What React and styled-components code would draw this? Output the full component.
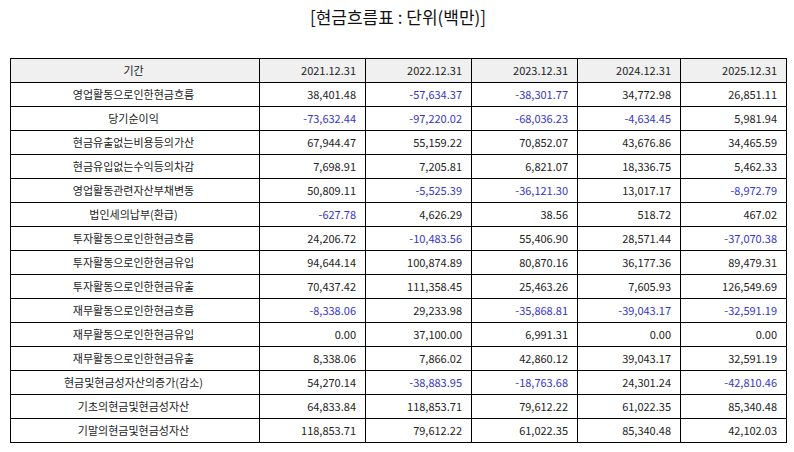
import React from "react";
import styled, { createGlobalStyle } from "styled-components";

const GlobalStyle = createGlobalStyle`
  html, body {
    margin: 0;
    padding: 0;
    background: #fff;
  }
  body {
    font-family: "Noto Sans CJK KR", "Noto Sans", sans-serif;
    color: #222;
  }
`;

const dates = ["2021.12.31", "2022.12.31", "2023.12.31", "2024.12.31", "2025.12.31"];
const colWidths = [249, 106, 106, 106, 103, 106];

const rows = [
  ["영업활동으로인한현금흐름", "38,401.48", "-57,634.37", "-38,301.77", "34,772.98", "26,851.11"],
  ["당기순이익", "-73,632.44", "-97,220.02", "-68,036.23", "-4,634.45", "5,981.94"],
  ["현금유출없는비용등의가산", "67,944.47", "55,159.22", "70,852.07", "43,676.86", "34,465.59"],
  ["현금유입없는수익등의차감", "7,698.91", "7,205.81", "6,821.07", "18,336.75", "5,462.33"],
  ["영업활동관련자산부채변동", "50,809.11", "-5,525.39", "-36,121.30", "13,017.17", "-8,972.79"],
  ["법인세의납부(환급)", "-627.78", "4,626.29", "38.56", "518.72", "467.02"],
  ["투자활동으로인한현금흐름", "24,206.72", "-10,483.56", "55,406.90", "28,571.44", "-37,070.38"],
  ["투자활동으로인한현금유입", "94,644.14", "100,874.89", "80,870.16", "36,177.36", "89,479.31"],
  ["투자활동으로인한현금유출", "70,437.42", "111,358.45", "25,463.26", "7,605.93", "126,549.69"],
  ["재무활동으로인한현금흐름", "-8,338.06", "29,233.98", "-35,868.81", "-39,043.17", "-32,591.19"],
  ["재무활동으로인한현금유입", "0.00", "37,100.00", "6,991.31", "0.00", "0.00"],
  ["재무활동으로인한현금유출", "8,338.06", "7,866.02", "42,860.12", "39,043.17", "32,591.19"],
  ["현금및현금성자산의증가(감소)", "54,270.14", "-38,883.95", "-18,763.68", "24,301.24", "-42,810.46"],
  ["기초의현금및현금성자산", "64,833.84", "118,853.71", "79,612.22", "61,022.35", "85,340.48"],
  ["기말의현금및현금성자산", "118,853.71", "79,612.22", "61,022.35", "85,340.48", "42,102.03"],
];

const Page = styled.div`
  width: 794px;
  padding: 5px 8px 0 10px;
  box-sizing: border-box;
`;

const Title = styled.h1`
  margin: 0;
  height: 53px;
  font-size: 17px;
  font-weight: 400;
  line-height: 24px;
  text-align: center;
  color: #111;
`;

const Table = styled.table`
  width: 776px;
  border-collapse: collapse;
  table-layout: fixed;
  font-size: 11px;
`;

const Col = styled.col`
  width: ${(p) => p.$w}px;
`;

const Cell = styled.td`
  height: 23px;
  padding: 0 9px 0 6px;
  border: 1px solid #000;
  text-align: ${(p) => (p.$center ? "center" : "right")};
  color: ${(p) => (p.$neg ? "#3535c8" : "#222")};
  background: #fff;
  white-space: nowrap;
  line-height: 1;
`;

const HeadCell = styled(Cell).attrs({ as: "th" })`
  background: #f0f0f0;
  font-weight: 400;
`;

export default function App() {
  return (
    <>
      <GlobalStyle />
      <Page>
        <Title>[현금흐름표 : 단위(백만)]</Title>
        <Table>
          <colgroup>
            {colWidths.map((w, i) => (
              <Col key={i} $w={w} />
            ))}
          </colgroup>
          <thead>
            <tr>
              <HeadCell $center>기간</HeadCell>
              {dates.map((d) => (
                <HeadCell key={d}>{d}</HeadCell>
              ))}
            </tr>
          </thead>
          <tbody>
            {rows.map(([label, ...vals]) => (
              <tr key={label}>
                <Cell $center>{label}</Cell>
                {vals.map((v, i) => (
                  <Cell key={i} $neg={v.startsWith("-")}>
                    {v}
                  </Cell>
                ))}
              </tr>
            ))}
          </tbody>
        </Table>
      </Page>
    </>
  );
}
